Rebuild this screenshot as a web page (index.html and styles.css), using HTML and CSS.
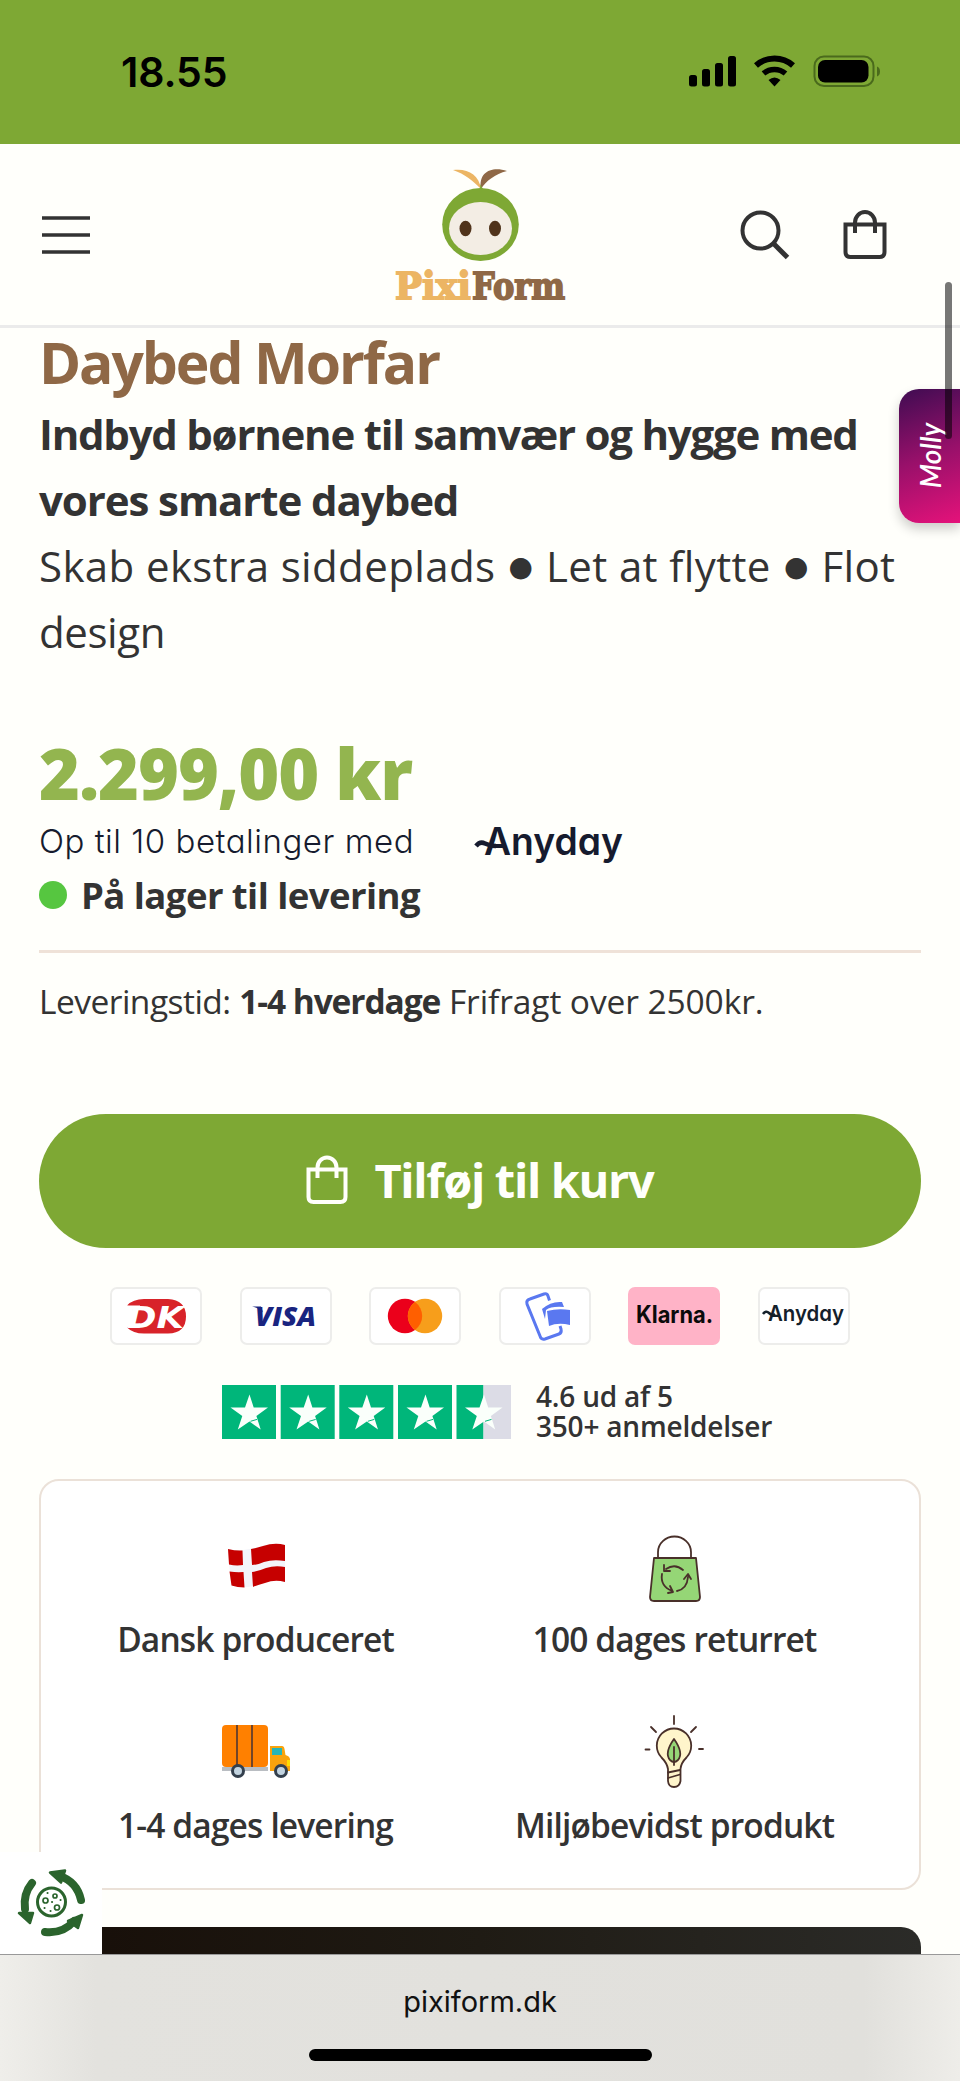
FILE: index.html
```html
<!DOCTYPE html>
<html lang="da">
<head>
<meta charset="utf-8">
<title>Daybed Morfar – PixiForm</title>
<link rel="stylesheet" href="styles.css">
</head>
<body>
<div class="statusbar">
  <span class="time">18.55</span>
  <svg class="status-icons" width="194" height="34" viewBox="0 0 194 34">
    <rect x="1" y="20" width="8" height="11.500" rx="2.500"/><rect x="14" y="14" width="8" height="17.500" rx="2.500"/><rect x="27" y="8" width="8" height="23.500" rx="2.500"/><rect x="40" y="1" width="8" height="30.500" rx="2.500"/>
    <path d="M68 10.500a28 28 0 0 1 37 0" fill="none" stroke="#000" stroke-width="6"/>
    <path d="M75.500 18.500a17 17 0 0 1 22 0" fill="none" stroke="#000" stroke-width="5.500"/>
    <path d="M80.500 25q6-5 12 0l-6 6.500z"/>
    <rect x="126.500" y="1.500" width="59" height="29.500" rx="9.500" fill="none" stroke="#4a6a1c" stroke-width="2"/>
    <rect x="130" y="5" width="50.500" height="22.500" rx="7"/>
    <path d="M189 11.500q3 1 3 5t-3 5z" fill="#4a6a1c"/>
  </svg>
</div>
<header class="header">
  <svg class="menu" width="48" height="40" viewBox="0 0 48 40"><path d="M0 3h48M0 20h48M0 37h48" stroke="#333" stroke-width="3.500"/></svg>
  <svg class="logo" width="176" height="150" viewBox="0 0 176 150">
    <path d="M61 4c14-2 26 4 28 19-8-8-16-15-28-19z" fill="#ecb564"/>
    <path d="M115 5c-14-5-29 0-26 18 5-8 14-15 26-18z" fill="#8f6846"/>
    <path d="M86 27q3-5 2-9l3 5-1 5z" fill="#7ea834"/>
    <ellipse cx="88.500" cy="58.500" rx="38.300" ry="36.500" fill="#7ea834"/>
    <ellipse cx="88.500" cy="62.500" rx="31.500" ry="26.500" fill="#f3ede4"/>
    <ellipse cx="73.500" cy="62.500" rx="6" ry="7.800" fill="#50331b"/><ellipse cx="103" cy="62.500" rx="6" ry="7.800" fill="#50331b"/>
    <text class="wordmark" x="3" y="133" textLength="76" lengthAdjust="spacingAndGlyphs" fill="#ecb564" stroke="#ecb564">Pixi</text>
    <text class="wordmark" x="80" y="133" textLength="93" lengthAdjust="spacingAndGlyphs" fill="#8f6846" stroke="#8f6846">Form</text>
  </svg>
  <div class="actions">
    <svg width="50" height="50" viewBox="0 0 50 50" fill="none" stroke="#333" stroke-width="4"><circle cx="20.500" cy="20.500" r="18"/><path d="M33.500 33.500 47.500 47.500" stroke-width="5"/></svg>
    <svg width="44" height="50" viewBox="0 0 44 50" fill="none" stroke="#333" stroke-width="4"><path d="M2.500 14.500h39V42q0 5-5 5h-29q-5 0-5-5zM12 23V12.500a10 10.500 0 0 1 20 0V23"/></svg>
  </div>
</header>
<main class="product">
  <h1 class="title">Daybed Morfar</h1>
  <p class="lead strong">Indbyd børnene til samvær og hygge med<br><span class="second">vores smarte daybed</span></p>
  <p class="lead light">Skab ekstra siddeplads <b class="bullet">●</b> Let at flytte <b class="bullet">●</b> Flot<br><span class="tight">design</span></p>
  <div class="price">2.299,00 kr</div>
  <div class="installment">
    <span class="inst-text">Op til 10 betalinger med</span>
    <svg class="anyday" width="152" height="50" viewBox="0 0 152 50"><text x="10" y="39" textLength="139" lengthAdjust="spacingAndGlyphs" class="anyday-text">Anyday</text><path d="M2 30q4-5 9-2.500t11 2.500" fill="none" stroke="#161b2e" stroke-width="4.500"/></svg>
  </div>
  <div class="stock"><i class="dot"></i><span>På lager til levering</span></div>
  <div class="delivery"><span class="label">Leveringstid:</span> <b>1-4 hverdage</b> <span>Frifragt over 2500kr.</span></div>
  <button class="buy">
    <svg width="44" height="50" viewBox="0 0 44 50" fill="none" stroke="#fffffb" stroke-width="4"><path d="M2.500 14.500h37V42q0 5-5 5h-27q-5 0-5-5zM11.500 23V12.500a9.500 10 0 0 1 19 0V23"/></svg>
    <span>Tilføj til kurv</span>
  </button>
  <div class="payments">
    <svg class="pay" viewBox="0 0 92 58"><path d="M17 18.500Q23 12 34 12H58q18 1 18 17.500T58 46.500H34q-11 0-17-6l5-2V20z" fill="#d8232a"/><path d="M16 18.500h14v4H16zM16 36.500h14v4H16z" fill="#fff"/><text x="17" y="40.500" class="dk" textLength="57" lengthAdjust="spacingAndGlyphs">DK</text></svg>
    <svg class="pay" viewBox="0 0 92 58"><text x="15" y="38.500" class="visa" textLength="61" lengthAdjust="spacingAndGlyphs">VISA</text><path d="M12 19.500h9l2 6q-3-4-11-6z" fill="#192480"/></svg>
    <svg class="pay" viewBox="0 0 92 58"><circle cx="36" cy="29" r="17.200" fill="#eb001b"/><circle cx="56" cy="29" r="17.200" fill="#f79e1b"/><path d="M46 15a17.200 17.200 0 0 1 0 28a17.200 17.200 0 0 1 0-28z" fill="#ff5f00"/></svg>
    <svg class="pay" viewBox="0 0 92 58"><path d="M50.500 13.500 49 9q-1-3-4-2L31 12q-4 1-3 5l13 32q1 4 5 3l14-5q3-1 2-5l-1-3" fill="none" stroke="#5a78f0" stroke-width="3"/><path d="M43 22q9-8 20-7l2 5q-13-1-18 3l-1 9z" fill="#5a78f0"/><path d="M48 24q11-3 23-1v15q-12-3-21 1z" fill="#5a78f0"/></svg>
    <svg class="pay klarna" viewBox="0 0 92 58"><text x="8" y="36" class="klarna-text" textLength="77" lengthAdjust="spacingAndGlyphs">Klarna.</text></svg>
    <svg class="pay" viewBox="0 0 92 58"><text x="10" y="33.500" class="anyday-small" textLength="76" lengthAdjust="spacingAndGlyphs">Anyday</text><path d="M5 27q3-4 6-1t6 1" fill="none" stroke="#14202b" stroke-width="2.500"/></svg>
  </div>
  <div class="rating">
    <svg width="290" height="54" viewBox="0 0 290 54">
      <defs><g id="star"><path d="M27.500 9.500 31.700 22.500H46L34.400 30.900 38.700 44.500 27.500 36.500 15.800 44.500 20.300 30.900 8.500 22.500H23z" fill="#fafffb"/><path d="M28.500 36.300l6.500-1.900" stroke="#00b67a" stroke-width="1"/></g></defs>
      <path d="M0 0h54v54H0zM58.700 0h54v54h-54zM117.300 0h54v54h-54zM176 0h54v54h-54zM234.500 0h27v54h-27z" fill="#00b67a"/><path d="M261.500 0H289v54h-27.500z" fill="#dcdce6"/>
      <use href="#star"/><use href="#star" x="58.700"/><use href="#star" x="117.300"/><use href="#star" x="176"/><use href="#star" x="234.500"/>
    </svg>
    <div class="rating-text">4.6 ud af 5<br>350+ anmeldelser</div>
  </div>
  <section class="usps">
    <div class="usp">
      <svg viewBox="0 0 80 80"><path d="M12 21q8 2 15 1 10-1 19-4 12-4 23-1v37q-11-3-22 1-12 5-23 4l-9-2z" fill="#f3f4fa"/><path d="M12 21q8 2 14.500 1.500l.500 14.500q-7 1-14-.500zM35 21q6-1 12-3 12-4 22-1v16q-12-2-21 1-7 3-12 3zM13.500 43.500q7 1 14 .5l1 15.500q-7 0-13-2zM36 44q7-1 14-4 9-3 19-1v15q-10-3-20 1-7 2-12 4z" fill="#c60000"/></svg>
      <span>Dansk produceret</span>
    </div>
    <div class="usp">
      <svg viewBox="0 0 80 80" fill="none" stroke="#49302a" stroke-width="1.800" stroke-linecap="round" stroke-linejoin="round"><path d="M19 30h42l4 39q0 4-4 4H19q-4 0-4-4z" fill="#95d676"/><path d="M23 30V24a16.500 15.500 0 0 1 33 0v6"/><path d="M48 42q-8-7-17-1M29 37v6h6M27 46q-2 12 10 17M33 65l5-1-3-6M42 63q10-2 11-14M49 51l4-5 3 5"/></svg>
      <span>100 dages returret</span>
    </div>
    <div class="usp">
      <svg viewBox="0 0 80 80"><path d="M6 53h46v4H6z" fill="#b9bdc2"/><rect x="6" y="11" width="46" height="42" rx="4" fill="#ff8000"/><path d="M21 11v42M36 11v42" stroke="#5b3a2e" stroke-width="1.700"/><path d="M54 32h12q2 0 2.500 3l1 6q4 1 4.500 4v12H54z" fill="#f9a30d"/><path d="M56 34h10v7H56z" fill="#26b5b8"/><path d="M71 46h3v6h-3z" fill="#ffdc00"/><circle cx="22" cy="57" r="5.500" fill="#c3d4e0" stroke="#34404d" stroke-width="3"/><circle cx="65" cy="57" r="5.500" fill="#c3d4e0" stroke="#34404d" stroke-width="3"/></svg>
      <span>1-4 dages levering</span>
    </div>
    <div class="usp">
      <svg viewBox="0 0 80 80" fill="none" stroke="#49302a" stroke-width="1.800" stroke-linecap="round" stroke-linejoin="round"><path d="M33 55Q32 49 26.500 43.500a17.200 17.200 0 1 1 25 0Q46 49 45.500 55v12q-1 6-6.500 6t-6-6z" fill="#fff5cb"/><path d="M39 25q-10 14-4 21 4 4 8 0 6-7-4-21z" fill="#95d676"/><path d="M39 33v18M33 58.500l12-2.500M33 64l12-3.500M39 2v8M16 13l5 5M61 13l-5 5M10.500 35.500h4M64 35h4"/></svg>
      <span>Miljøbevidst produkt</span>
    </div>
  </section>
  <div class="media"></div>
</main>
<div class="cookie">
  <svg width="102" height="102" viewBox="0 0 102 102" fill="none" stroke="#2b642d" stroke-width="8" stroke-linecap="round"><path d="M32 31q-9 11-7 26M60 24q17 6 21 24M45 80q18 2 29-11"/><path d="M19 61h14l-3 10zM50 20.500l15-2-4 12zM68 69l14-6-4 13z" fill="#2b642d" stroke-width="2.500" stroke-linejoin="round"/><circle cx="51.500" cy="50" r="14" stroke-width="3"/><g stroke-width="1.700"><circle cx="45.500" cy="48.500" r="2.500"/><circle cx="55" cy="44" r="2"/><circle cx="57" cy="55.500" r="2.500"/></g><path d="M47.500 41h.1M52 50h.1M60.500 48h.1M44.500 56h.1M50.500 59h.1" stroke-width="2"/></svg>
</div>
<div class="molly"><span>Molly</span></div>
<div class="scrollbar"></div>
<footer class="browserbar"><span>pixiform.dk</span><i class="home"></i></footer>
</body>
</html>
```
FILE: styles.css
```css
*{box-sizing:border-box}
body{margin:0;width:960px;height:2081px;overflow:hidden;position:relative;background:#fffffb;color:#333;font-family:"Open Sans","Noto Sans",sans-serif}
h1,p{margin:0}
svg{display:block;flex:none}
.statusbar{height:144px;background:#7ea834;display:flex;justify-content:space-between;padding:55px 78px 0 121px}
.time{font:600 41px/34px Inter,sans-serif;letter-spacing:-.1px;color:#000}
.header{height:184px;border-bottom:3px solid #ebebeb;display:grid;grid-template-columns:1fr 176px 1fr;align-items:center;padding:0 73px 0 42px}
.logo{margin-top:12px;margin-left:15px}
.wordmark{font:bold 38px "DejaVu Serif",serif;stroke-width:1.800}
.actions{display:flex;justify-content:flex-end;gap:53px}
.product{padding:1px 39px 0}
.title{font-size:57px;line-height:66px;font-weight:700;color:#8f6846;letter-spacing:-2.080px;white-space:nowrap}
.lead{font-size:42px;line-height:66px;white-space:nowrap}
.strong{font-weight:700;margin-top:6px;letter-spacing:-1.250px}
.second{letter-spacing:-1.080px}
.light{letter-spacing:.38px}
.tight{letter-spacing:-.4px}
.bullet{display:inline-block;width:28px;text-align:center;font:28px/1 "DejaVu Sans",sans-serif;letter-spacing:0;position:relative;top:-3px;vertical-align:3px}
.price{font-size:70px;line-height:80px;font-weight:800;color:#93b54f;letter-spacing:-1.100px;margin-top:68px;white-space:nowrap}
.installment{display:flex;height:50px;margin-top:3px;gap:60px;color:#161b2e;white-space:nowrap}
.inst-text{font:300 33px/50px Inter,sans-serif;font-feature-settings:"cv11";letter-spacing:.52px}
.anyday-text{font:600 38px Inter,sans-serif;font-feature-settings:"cv11";fill:#161b2e}
.stock{display:flex;align-items:center;gap:14px;font-size:36.5px;line-height:54px;font-weight:700;letter-spacing:-.56px;margin-top:2px;white-space:nowrap}
.dot{width:28px;height:28px;border-radius:50%;background:#56c640}
.delivery{border-top:3px solid #efe2d8;margin-top:28px;padding-top:23px;font-size:33.5px;line-height:50px;letter-spacing:-.1px;white-space:nowrap}
.delivery .label{letter-spacing:-.52px}
.delivery b{letter-spacing:-1.080px}
.buy{display:flex;align-items:center;justify-content:center;gap:24px;width:882px;height:134px;margin:88px 0 0;border:0;border-radius:67px;background:#7ea834;color:#fffffb;font:700 47px "Open Sans",sans-serif;letter-spacing:-1.340px;padding:0 0 2px}
.payments{display:flex;justify-content:space-between;width:740px;margin:39px auto 0}
.pay{width:92px;height:58px;background:#fff;border-radius:7px;box-shadow:inset 0 0 0 2px #ededeb}
.klarna{background:#ffb3c7;box-shadow:none}
.dk{font:italic bold 30px "DejaVu Sans",sans-serif;fill:#fff}
.visa{font:italic 800 27px "Open Sans",sans-serif;fill:#192480}
.klarna-text{font:700 24px Inter,sans-serif;fill:#0b0b0b}
.anyday-small{font:600 22px Inter,sans-serif;font-feature-settings:"cv11";fill:#14202b}
.rating{display:flex;gap:24px;margin:40px 0 0 183px;height:54px}
.rating-text{font-size:28px;line-height:29.500px;font-weight:650;letter-spacing:-.2px;margin-top:-3px;white-space:nowrap}
.usps{display:grid;grid-template-columns:419px 419px;row-gap:52px;width:882px;height:411px;margin:40px 0 0;padding:47px 0 0 5px;background:#fff;border:2px solid #ebe1d8;border-radius:20px;align-content:start}
.usp{display:flex;flex-direction:column;align-items:center;gap:8px;font-size:33.5px;line-height:46px;font-weight:600;letter-spacing:-.85px;white-space:nowrap}
.usp svg{width:80px;height:80px}
.media{height:40px;margin-top:37px;border-radius:20px 20px 0 0;background:linear-gradient(90deg,#170e08,#1f1b14 50%,#2b2b28)}
.cookie{position:absolute;left:0;top:1852px;width:102px;height:102px;background:#fff}
.molly{position:absolute;right:0;top:389px;width:61px;height:134px;border-radius:20px 0 0 20px;background:linear-gradient(160deg,#3f0c52,#98106a 50%,#e5127a);box-shadow:0 6px 12px #0003;display:flex;align-items:center;justify-content:center}
.molly span{writing-mode:vertical-rl;transform:rotate(180deg);font:italic 600 28px Lato,cursive;color:#fff}
.scrollbar{position:absolute;left:945px;top:282px;width:7px;height:157px;border-radius:4px;background:#0008}
.browserbar{position:absolute;left:0;right:0;bottom:0;height:127px;border-top:1px solid #999;background:linear-gradient(90deg,#efeeea,#e3e2de 10%,#e1e0dc 90%,#eeede9);display:flex;flex-direction:column;align-items:center;color:#111;font:400 29px/36px Inter,sans-serif;padding-top:29px}
.home{width:343px;height:12px;border-radius:6px;background:#000;margin-top:29px}
```
